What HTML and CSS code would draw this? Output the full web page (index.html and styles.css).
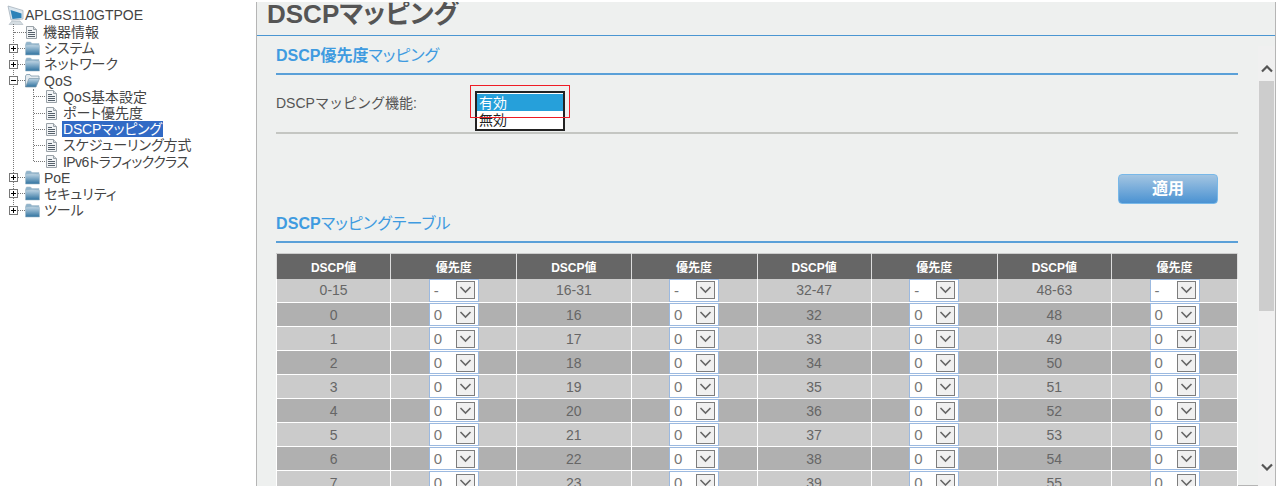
FILE: index.html
```html
<!DOCTYPE html>
<html lang="ja">
<head>
    <meta charset="UTF-8">
    <title>DSCPマッピング</title>
    <link rel="stylesheet" href="styles.css">
</head>
<body>
    <svg class="defs" width="0" height="0">
        <defs>
            <linearGradient id="folderFill" x1="0" y1="0" x2="0" y2="1">
                <stop offset="0" stop-color="#c0d6e5"/>
                <stop offset="1" stop-color="#2f729f"/>
            </linearGradient>
            <symbol id="icon-page" viewBox="0 0 11 13">
                <path d="M.5.500h7l3 3v9h-10z" fill="#f2f4f6" stroke="#9aa2a8"/>
                <path d="M7.500.500v3h3" fill="#d5dade" stroke="#9aa2a8"/>
                <path d="M2 4.500h4M2 6.500h7M2 8.500h7M2 10.500h7" stroke="#56616b"/>
            </symbol>
            <symbol id="icon-folder" viewBox="0 0 15 15">
                <path d="M.5 3.500l1-2.500h4l1.500 1.500h7v2h-13.500z" fill="#8fb3cb" stroke="#a9bfce" stroke-width=".6"/>
                <path d="M.5 4.500c4-1 9-1 14 0v9.500h-14z" fill="url(#folderFill)" stroke="#9db8ca" stroke-width=".6"/>
            </symbol>
            <symbol id="icon-folder-open" viewBox="0 0 15 15">
                <path d="M.5 14V3l1-1.500h3.500l1 1.500h8v2.500" fill="#e3eaef" stroke="#7f99ab" stroke-width=".8"/>
                <path d="M.5 14l3.500-8.500h10.500l-3.500 8.500z" fill="url(#folderFill)" stroke="#7f99ab" stroke-width=".7"/>
            </symbol>
            <symbol id="icon-monitor" viewBox="0 0 18 20">
                <path d="M1 1l15 4.500v8.500l-12 1z" fill="#dbe6ee" stroke="#a7b3bc" stroke-width=".8"/>
                <path d="M3.500 5l11 3.500v4.500l-9 1z" fill="#2d82b8"/>
                <path d="M5 16h8l3 3.500h-14z" fill="#d5dde2" stroke="#a7b3bc" stroke-width=".6"/>
            </symbol>
        </defs>
    </svg>

    <div class="page">
        <nav class="sidebar">
            <div class="tree-root">
                <svg class="root-icon"><use href="#icon-monitor"/></svg>
                <span>APLGS110GTPOE</span>
            </div>
            <ul class="tree">
                <li class="tree-row leaf">
                    <span class="dots"></span>
                    <svg class="page-icon"><use href="#icon-page"/></svg>
                    <span class="tree-label">機器情報</span>
                </li>
                <li class="tree-row">
                    <span class="toggle plus"></span><span class="dots short"></span>
                    <svg class="folder-icon"><use href="#icon-folder"/></svg>
                    <span class="tree-label">システム</span>
                </li>
                <li class="tree-row">
                    <span class="toggle plus"></span><span class="dots short"></span>
                    <svg class="folder-icon"><use href="#icon-folder"/></svg>
                    <span class="tree-label">ネットワーク</span>
                </li>
                <li class="tree-row">
                    <span class="toggle minus"></span><span class="dots short"></span>
                    <svg class="folder-icon"><use href="#icon-folder-open"/></svg>
                    <span class="tree-label">QoS</span>
                </li>
                <li>
                    <ul class="subtree">
                        <li class="tree-row sub">
                            <span class="dots"></span>
                            <svg class="page-icon"><use href="#icon-page"/></svg>
                            <span class="tree-label">QoS基本設定</span>
                        </li>
                        <li class="tree-row sub">
                            <span class="dots"></span>
                            <svg class="page-icon"><use href="#icon-page"/></svg>
                            <span class="tree-label">ポート優先度</span>
                        </li>
                        <li class="tree-row sub">
                            <span class="dots"></span>
                            <svg class="page-icon"><use href="#icon-page"/></svg>
                            <span class="tree-label selected">DSCPマッピング</span>
                        </li>
                        <li class="tree-row sub">
                            <span class="dots"></span>
                            <svg class="page-icon"><use href="#icon-page"/></svg>
                            <span class="tree-label">スケジューリング方式</span>
                        </li>
                        <li class="tree-row sub">
                            <span class="dots"></span>
                            <svg class="page-icon"><use href="#icon-page"/></svg>
                            <span class="tree-label tight">IPv6トラフィッククラス</span>
                        </li>
                    </ul>
                </li>
                <li class="tree-row">
                    <span class="toggle plus"></span><span class="dots short"></span>
                    <svg class="folder-icon"><use href="#icon-folder"/></svg>
                    <span class="tree-label">PoE</span>
                </li>
                <li class="tree-row">
                    <span class="toggle plus"></span><span class="dots short"></span>
                    <svg class="folder-icon"><use href="#icon-folder"/></svg>
                    <span class="tree-label">セキュリティ</span>
                </li>
                <li class="tree-row">
                    <span class="toggle plus"></span><span class="dots short"></span>
                    <svg class="folder-icon"><use href="#icon-folder"/></svg>
                    <span class="tree-label">ツール</span>
                </li>
            </ul>
        </nav>

        <main class="main">
            <h1 class="page-title">DSCPマッピング</h1>
            <div class="scroll-area">
                <div class="content">
                    <h2 class="section-title"><strong>DSCP優先度</strong>マッピング</h2>
                    <div class="form-row">
                        <label class="form-label">DSCPマッピング機能:</label>
                        <div class="dropdown">
                            <div class="dropdown-list">
                                <div class="dropdown-item active">有効</div>
                                <div class="dropdown-item">無効</div>
                            </div>
                            <div class="highlight-box"></div>
                        </div>
                    </div>
                    <div class="button-row">
                        <button class="apply-btn">適用</button>
                    </div>
                    <h2 class="section-title table-title"><strong>DSCP</strong>マッピングテーブル</h2>
                    <table class="dscp-table">
                        <thead>
                            <tr id="tableHead"></tr>
                        </thead>
                        <tbody id="tableBody"></tbody>
                    </table>
                </div>
                <div class="scrollbar">
                    <svg class="scroll-arrow" viewBox="0 0 12 8"><path d="M1 6.500l5-5 5 5" fill="none" stroke="#555" stroke-width="2.200"/></svg>
                    <div class="scroll-track"><div class="scroll-thumb"></div></div>
                    <svg class="scroll-arrow" viewBox="0 0 12 8"><path d="M1 1.500l5 5 5-5" fill="none" stroke="#555" stroke-width="2.200"/></svg>
                </div>
            </div>
        </main>
    </div>

    <script src="script.js"></script>
</body>
</html>
```

FILE: styles.css
```css
* {
    margin: 0;
    padding: 0;
    box-sizing: border-box;
    font-family: "Liberation Sans", "Noto Sans CJK JP", sans-serif;
}

html, body {
    height: 100%;
    overflow: hidden;
    background-color: #fff;
}

.defs {
    position: absolute;
}

.page {
    display: flex;
    height: 488px;
}

/* left tree */
.sidebar {
    width: 256px;
    flex-shrink: 0;
    padding: 6px 0 0 8px;
    font-size: 14px;
    color: #444;
}

.tree-root {
    display: flex;
    align-items: center;
    height: 18px;
}

.root-icon {
    width: 18px;
    height: 20px;
    margin-left: -1px;
    flex-shrink: 0;
}

.tree {
    list-style: none;
    position: relative;
    font-feature-settings: "palt";
}

.tree::before {
    content: "";
    position: absolute;
    left: 5px;
    top: 0;
    height: 183px;
    border-left: 1px dotted #777;
}

.subtree {
    list-style: none;
    position: relative;
}

.subtree::before {
    content: "";
    position: absolute;
    left: 25px;
    top: 0;
    height: 72px;
    border-left: 1px dotted #777;
}

.tree-row {
    display: flex;
    align-items: center;
    height: 16.2px;
    position: relative;
    white-space: nowrap;
}

.tree-row.sub {
    padding-left: 25px;
}

.toggle {
    width: 9px;
    height: 9px;
    margin-left: 1px;
    border: 1px solid #777;
    background-color: #fff;
    position: relative;
    z-index: 1;
}

.toggle.plus {
    background: linear-gradient(#000, #000) center / 5px 1px no-repeat,
                linear-gradient(#000, #000) center / 1px 5px no-repeat,
                #fff;
}

.toggle.minus {
    background: linear-gradient(#000, #000) center / 5px 1px no-repeat, #fff;
}

.dots {
    width: 12px;
    border-top: 1px dotted #777;
    margin-left: 6px;
}

.tree-row.sub .dots {
    width: 11px;
    margin-left: 1px;
    margin-right: 1px;
}

.dots.short {
    width: 7px;
    margin-left: 0;
}

.page-icon {
    width: 11px;
    height: 13px;
    flex-shrink: 0;
}

.folder-icon {
    width: 15px;
    height: 15px;
    flex-shrink: 0;
}

.tree-label {
    padding: 0 1px;
    margin-left: 3px;
    line-height: 16px;
}

.leaf .tree-label, .sub .tree-label {
    margin-left: 5px;
}

.tree-label.selected {
    background-color: #316ac5;
    color: #fff;
    letter-spacing: -0.2px;
}

.tree-label.tight {
    letter-spacing: -0.6px;
}

/* main panel */
.main {
    width: 1020px;
    height: 484px;
    border-left: 1px solid #b5b5b5;
    border-right: 1px solid #b5b5b5;
    margin-top: 2px;
    background-color: #eef0ef;
    display: flex;
    flex-direction: column;
    overflow: hidden;
}

.page-title {
    height: 34px;
    flex-shrink: 0;
    padding-left: 10px;
    font-size: 26px;
    line-height: 25px;
    font-weight: 700;
    color: #555;
    border-bottom: 1px solid #4a96d2;
    font-feature-settings: "palt";
}

.scroll-area {
    display: flex;
    flex: 1;
    min-height: 0;
}

.content {
    flex: 1;
    padding: 9px 20px 0 19px;
    overflow: hidden;
    position: relative;
}

/* short line under the table gutter, table itself runs off the bottom */
.content::after {
    content: "";
    position: absolute;
    right: 0;
    bottom: 0;
    width: 20px;
    height: 1px;
    background-color: #b5b5b5;
}

.section-title {
    height: 30px;
    font-size: 16px;
    line-height: 21px;
    font-weight: 400;
    color: #3f9be0;
    border-bottom: 2px solid #5aa0d8;
    font-feature-settings: "palt";
}

.section-title strong {
    font-weight: 700;
}

.form-row {
    display: flex;
    align-items: flex-start;
    height: 59px;
    padding-top: 17px;
    border-bottom: 2px solid #c4c6c2;
    font-size: 14px;
    color: #555;
}

.form-label {
    width: 199px;
}

.dropdown {
    position: relative;
}

.dropdown-list {
    position: absolute;
    left: 0;
    top: -1px;
    width: 90px;
    height: 40px;
    border: 2px solid #222;
    background-color: #fff;
    color: #222;
    z-index: 2;
    padding-top: 1px;
}

.dropdown-item {
    height: 17px;
    line-height: 19px;
    padding-left: 2px;
}

.dropdown-item.active {
    background-color: #26a0da;
    color: #fff;
}

.highlight-box {
    position: absolute;
    left: -5px;
    top: -7px;
    width: 100px;
    height: 33px;
    border: 1px solid #ee1c25;
    z-index: 3;
}

.button-row {
    display: flex;
    justify-content: flex-end;
    height: 38px;
    padding-right: 20px;
    margin-top: 40px;
}

.apply-btn {
    width: 100px;
    height: 30px;
    padding-bottom: 4px;
    border: 1px solid #78b8e8;
    border-radius: 4px;
    background: linear-gradient(#a3c5e2, #4a92d2);
    color: #fff;
    font-size: 16px;
    font-weight: 700;
}

.table-title {
    height: 31px;
    line-height: 23px;
    letter-spacing: 0.1px;
}

.dscp-table {
    width: 961px;
    margin-top: 10px;
    border-collapse: collapse;
    table-layout: fixed;
    font-size: 14px;
    color: #666;
}

.dscp-table th {
    height: 25px;
    background-color: #666;
    color: #fff;
    font-size: 12px;
    border-style: solid;
    border-width: 1px 1px 0 1px;
    border-color: #ccc #ddd;
}

.dscp-table td {
    height: 24px;
    text-align: center;
    border: 1px solid #fff;
    border-width: 0 1px 1px;
    padding: 0;
}

.col-value {
    width: 114.25px;
}

.col-pri {
    width: 126px;
}

.dscp-table tr.odd td {
    background-color: #cbcbcb;
}

.dscp-table tr.even td {
    background-color: #b0b0b0;
}

.pri-select {
    display: flex;
    align-items: center;
    justify-content: space-between;
    width: 50px;
    height: 23px;
    margin: 0 auto;
    padding: 0 3px 0 4px;
    background-color: #fff;
    border: 1px solid #9bb9e0;
    color: #777;
    font-size: 15px;
    text-align: left;
}

.pri-arrow {
    display: flex;
    align-items: center;
    justify-content: center;
    width: 19px;
    height: 18px;
    background-color: #f0f0f0;
    border: 1px solid #7d7d7d;
}

.pri-arrow svg {
    width: 13px;
    height: 8px;
}

/* scrollbar */
.scrollbar {
    width: 17px;
    margin-top: 10px;
    display: flex;
    flex-direction: column;
    align-items: center;
    padding: 19px 0 15px;
    background-color: #f0f0f0;
    flex-shrink: 0;
}

.scroll-arrow {
    width: 12px;
    height: 8px;
    flex-shrink: 0;
}

.scroll-track {
    flex: 1;
    width: 100%;
    padding: 8px 0;
}

.scroll-thumb {
    height: 230px;
    background-color: #cdcdcd;
    margin: 0 1px;
}
```

FILE: script.js
```js
// build the DSCP table, 4 value/priority column pairs
const ranges = ['0-15', '16-31', '32-47', '48-63'];
const starts = [0, 16, 32, 48];
const arrow = '<span class="pri-arrow"><svg viewBox="0 0 13 8"><path d="M1.500 1l5 5 5-5" fill="none" stroke="#666" stroke-width="1.600"/></svg></span>';

function priSelect(value) {
    return `<div class="pri-select"><span>${value}</span>${arrow}</div>`;
}

const head = document.getElementById('tableHead');
starts.forEach(() => {
    head.innerHTML += '<th class="col-value">DSCP値</th><th class="col-pri">優先度</th>';
});

const body = document.getElementById('tableBody');
let html = '<tr class="odd">';
ranges.forEach(range => {
    html += `<td>${range}</td><td>${priSelect('-')}</td>`;
});
html += '</tr>';

for (let i = 0; i < 8; i++) {
    html += `<tr class="${i % 2 === 0 ? 'even' : 'odd'}">`;
    starts.forEach(start => {
        html += `<td>${start + i}</td><td>${priSelect('0')}</td>`;
    });
    html += '</tr>';
}
body.innerHTML = html;
```
